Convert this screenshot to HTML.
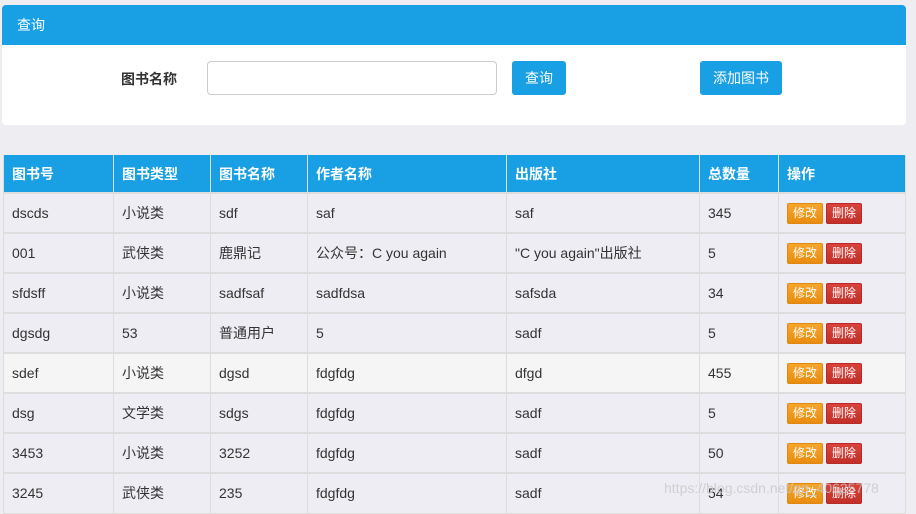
<!DOCTYPE html>
<html><head><meta charset="utf-8"><style>
*{margin:0;padding:0;box-sizing:border-box}
body{width:916px;height:506px;overflow:hidden;background:#eeedf2;font-family:"Liberation Sans","Noto Sans CJK SC",sans-serif;font-size:14px;color:#333;position:relative}
.panel{position:absolute;left:2px;top:5px;width:904px;height:120px;background:#fff;border-radius:4px;overflow:hidden}
.ph{height:40px;background:#189fe4;color:#fff;line-height:40px;padding-left:15px;font-size:14px}
.lbl{position:absolute;left:119px;top:64px;font-weight:bold;font-size:14px;color:#333}
.inp{position:absolute;left:205px;top:56px;width:290px;height:34px;border:1px solid #ccc;border-radius:4px}
.btn{position:absolute;top:56px;height:34px;background:#189fe4;color:#fff;border-radius:3px;text-align:center;line-height:34px;font-size:14px}
table{position:absolute;left:3px;top:155px;border-collapse:collapse;width:902px;table-layout:fixed}
th{background:#189fe4;color:#fff;text-align:left;height:38px;padding-left:8px;font-size:14px;border:1px solid #ddd;border-top:none}
td{height:40px;padding-left:8px;border:1px solid #ddd;border-top-width:2px;background:#eeedf3;font-size:14px;color:#333}
tr.h td{background:#f5f5f5}
.b{display:inline-block;width:36px;height:21px;line-height:19px;font-size:12px;color:#fff;text-align:center;border-radius:2px;vertical-align:middle}
.m{background:linear-gradient(#f7a52c,#e88d0f);border:1px solid #e0890f}
.d{background:linear-gradient(#d9433c,#c22f29);border:1px solid #b82a25;margin-left:3px}
.wm{position:absolute;left:664px;top:480px;color:rgba(200,200,200,.8);font-size:14px}
</style></head><body>
<div class="panel"><div class="ph">查询</div>
<div class="lbl">图书名称</div><div class="inp"></div>
<div class="btn" style="left:510px;width:54px">查询</div>
<div class="btn" style="left:698px;width:82px">添加图书</div>
</div>
<table>
<colgroup><col style="width:110px"><col style="width:97px"><col style="width:97px"><col style="width:199px"><col style="width:193px"><col style="width:79px"><col style="width:127px"></colgroup>
<tr><th>图书号</th><th>图书类型</th><th>图书名称</th><th>作者名称</th><th>出版社</th><th>总数量</th><th>操作</th></tr>
<tr><td>dscds</td><td>小说类</td><td>sdf</td><td>saf</td><td>saf</td><td>345</td><td><span class="b m">修改</span><span class="b d">删除</span></td></tr>
<tr><td>001</td><td>武侠类</td><td>鹿鼎记</td><td>公众号：C you again</td><td>"C you again"出版社</td><td>5</td><td><span class="b m">修改</span><span class="b d">删除</span></td></tr>
<tr><td>sfdsff</td><td>小说类</td><td>sadfsaf</td><td>sadfdsa</td><td>safsda</td><td>34</td><td><span class="b m">修改</span><span class="b d">删除</span></td></tr>
<tr><td>dgsdg</td><td>53</td><td>普通用户</td><td>5</td><td>sadf</td><td>5</td><td><span class="b m">修改</span><span class="b d">删除</span></td></tr>
<tr class="h"><td>sdef</td><td>小说类</td><td>dgsd</td><td>fdgfdg</td><td>dfgd</td><td>455</td><td><span class="b m">修改</span><span class="b d">删除</span></td></tr>
<tr><td>dsg</td><td>文学类</td><td>sdgs</td><td>fdgfdg</td><td>sadf</td><td>5</td><td><span class="b m">修改</span><span class="b d">删除</span></td></tr>
<tr><td>3453</td><td>小说类</td><td>3252</td><td>fdgfdg</td><td>sadf</td><td>50</td><td><span class="b m">修改</span><span class="b d">删除</span></td></tr>
<tr><td>3245</td><td>武侠类</td><td>235</td><td>fdgfdg</td><td>sadf</td><td>54</td><td><span class="b m">修改</span><span class="b d">删除</span></td></tr>
</table>
<div class="wm">https://blog.csdn.net/qq_40625778</div>
</body></html>
